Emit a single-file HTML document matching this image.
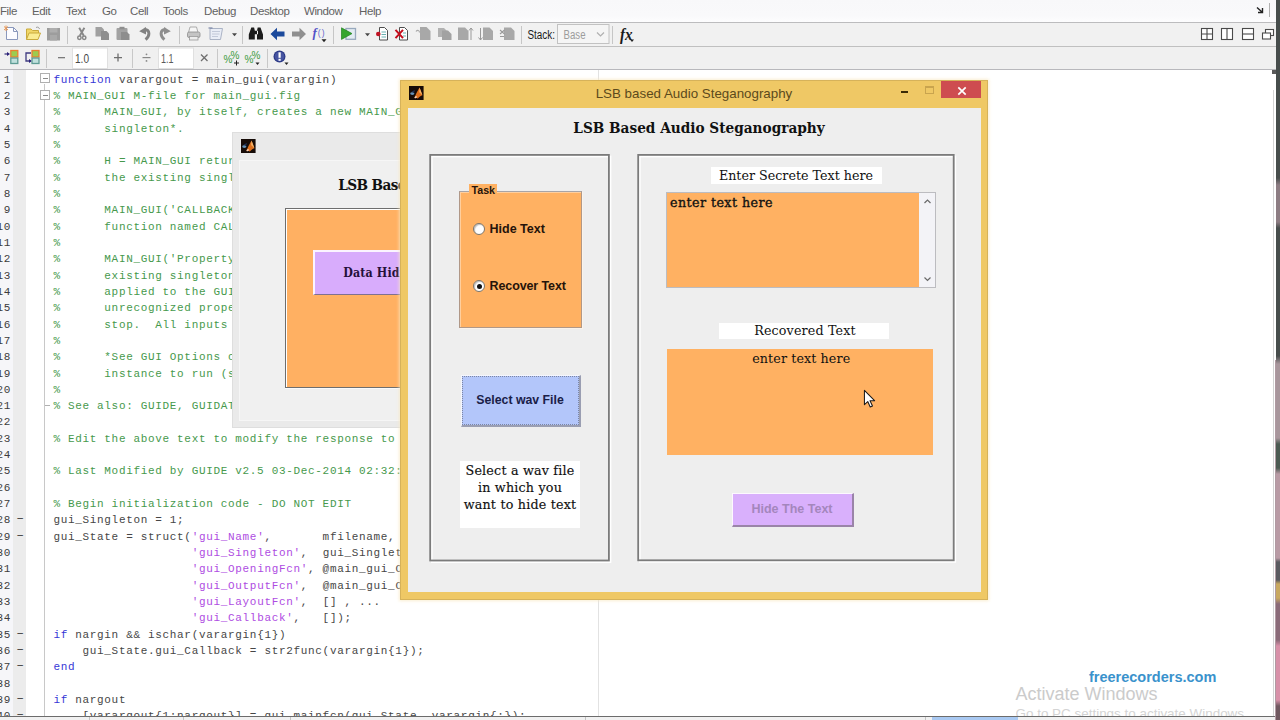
<!DOCTYPE html>
<html lang="en">
<head>
<meta charset="utf-8">
<title>LSB based Audio Steganography</title>
<style>
*{box-sizing:border-box;margin:0;padding:0}
html,body{width:1280px;height:720px;overflow:hidden;background:#fff}
body{position:relative;font-family:"Liberation Sans",sans-serif;font-size:12px;color:#000}
.abs{position:absolute}
/* ---------- main chrome ---------- */
#menubar{left:0;top:0;width:1276px;height:22px;background:linear-gradient(#f8f8fa,#f9f9fb 70%,#fdfdfe)}
#menubar span{position:absolute;top:4px;font-size:11.5px;letter-spacing:-.4px;line-height:14px;color:#626262;white-space:nowrap}
#menuline{left:0;top:22px;width:1276px;height:1px;background:#bcbcbe}
#tb1{left:0;top:23px;width:1276px;height:23px;background:#f1f1f1}
#tb1line{left:0;top:46px;width:1276px;height:1px;background:#c0c0c0}
#tb2{left:0;top:47px;width:1276px;height:22px;background:#f0f0f0}
#tb2line{left:0;top:69px;width:1276px;height:1px;background:#b8b8bc}
.sep{position:absolute;width:1px;background:#c4c4c4}
.ico{position:absolute;overflow:visible}
.fld{position:absolute;background:#fff;border:1px solid #e2e2e2;font-size:12px;line-height:18px;color:#555;padding-left:2px}
.sym{position:absolute;font-size:13px;line-height:14px;color:#666}
/* ---------- editor ---------- */
#editor{left:0;top:70px;width:1276px;height:646px;background:#fff;overflow:hidden}
#g1{left:0;top:0;width:13px;height:646px;background:#f6f6f9}
#g2{left:13px;top:0;width:13px;height:646px;background:#ececec}
#foldline{left:44px;top:14px;width:1px;height:640px;background:#c8c8c8}
#margin{left:597.8px;top:0;width:1.6px;height:646px;background:#e2e2e2}
#nums,#dashes,#code{position:absolute;top:1.6px;font-family:"Liberation Mono",monospace;font-size:11px;letter-spacing:.675px;line-height:16.34px}
#nums{left:-11px;width:22px;text-align:right;color:#3c3c3c}
#dashes{left:16.3px;width:10px;color:#444;letter-spacing:0;font-size:13px;margin-top:-1.2px}
#code{left:53.4px;color:#464646}
#code div,#nums div,#dashes div{height:16.34px;white-space:pre}
.k{color:#3636d6}.c{color:#46994c}.s{color:#ae4ce2}
.fbox{position:absolute;width:10px;height:10px;border:1px solid #b0b0b0;background:#fff}
.fbox:after{content:"";position:absolute;left:1.5px;top:3.5px;width:5px;height:1px;background:#8a8a8a}
#scroll{left:1273px;top:90px;width:1px;height:626px;background:#d4d4d4}
#darkedge{left:1276px;top:0;width:4px;height:720px;background:linear-gradient(#474d4c 0,#474d4c 178px,#8c7c82 185px,#8c7c82 222px,#474d4c 228px,#474d4c 356px,#a8969c 364px,#a8969c 438px,#4c5a52 444px,#4c5a52 468px,#b89aa4 474px,#b89aa4 558px,#5a5a60 562px,#5a5a60 580px,#c8a860 584px,#c8a860 598px,#8a6a78 604px,#8a6a78 640px,#d890a8 646px,#d890a8 700px,#705860 706px)}
#botline{left:0;top:715.5px;width:1276px;height:1px;background:#6c6c6c}
#botbar{left:0;top:716.5px;width:1276px;height:4px;background:#f1f1f1}
#botblue{left:931.5px;top:716.5px;width:86.5px;height:4px;background:#a9c9f2}

/* ---------- watermarks ---------- */
#wm1{left:1089px;top:667px;font:bold 14.5px "Liberation Sans",sans-serif;line-height:20px;color:#3a92cc;white-space:nowrap}
#wm2{left:1015.5px;top:681.6px;font:18px "Liberation Sans",sans-serif;line-height:24px;color:#cbcbcb;white-space:nowrap}
#wm3{left:1015.5px;top:706.4px;font:13.45px "Liberation Sans",sans-serif;line-height:16px;color:#d4d4d4;white-space:nowrap;height:10px;overflow:hidden}
/* ---------- back window ---------- */
#bw{left:232px;top:132px;width:200px;height:296px;background:#eaeaea;border:1px solid #dedede;overflow:hidden}
#bwc{left:5.5px;top:27px;width:200px;height:261px;background:#f0f0f0;border:1px solid #f6f6f6}
#bwh{left:105.2px;top:42.2px;font:bold 15.2px "DejaVu Serif Condensed","DejaVu Serif",serif;font-stretch:condensed;line-height:20px;letter-spacing:-.6px;color:#111;white-space:nowrap}
#bwp{left:51.5px;top:74.5px;width:200px;height:180.5px;background:#ffb062;border:1px solid #6e6e6e;box-shadow:inset 1px 1px 0 #fff,0 1px 0 #fafafa}
#bwb{left:80px;top:116.5px;width:150px;height:45.5px;background:#d8acfc;border-top:2px solid #fbf4ff;border-left:2px solid #fbf4ff;border-bottom:1px solid #807090}
#bwt{left:110.2px;top:131.2px;letter-spacing:.15px;font:bold 12.3px "DejaVu Serif Condensed","DejaVu Serif",serif;font-stretch:condensed;line-height:18px;color:#24103a;white-space:nowrap}
/* ---------- dialog ---------- */
#dlg{left:400px;top:80px;width:588px;height:520px;background:#efc865;box-shadow:0 0 0 1px #d6b25a inset,0 0 3px 1px rgba(250,234,196,.75)}
#dtitle{left:0;top:5.3px;width:588px;text-align:center;font:13.35px "Liberation Sans",sans-serif;line-height:18px;color:#5c4a1c;white-space:nowrap}
#dclose{left:541px;top:0.5px;width:40px;height:17.5px;background:#ce4c50}
#dc{left:8px;top:28px;width:573px;height:484px;background:#eeeeee}
#dh{left:0;top:9px;width:573px;padding-left:9px;text-align:center;font:bold 15.2px "DejaVu Serif Condensed","DejaVu Serif",serif;font-stretch:condensed;line-height:22px;color:#111;white-space:nowrap}
.pn{position:absolute;border:1px solid #fff}
.pn i{position:absolute;left:-2px;top:-2px;width:100%;height:100%;border:1px solid #7e7e7e;box-sizing:content-box}
.cam{font-family:"DejaVu Serif",serif;font-size:12.7px;color:#111;white-space:nowrap}
.arb{font-family:"Liberation Sans",sans-serif;font-weight:bold;font-size:12.5px;color:#26140a;white-space:nowrap}
.radio{position:absolute;width:12px;height:12px;border-radius:50%;background:#fff;border:1px solid #7c7468;box-shadow:inset 1px 1px 1px rgba(0,0,0,.25)}
</style>
</head>
<body>
<!-- MENU -->
<div id="menubar" class="abs">
<span style="left:0px">File</span><span style="left:32px">Edit</span><span style="left:66px">Text</span><span style="left:102px">Go</span><span style="left:130px">Cell</span><span style="left:163px">Tools</span><span style="left:204px">Debug</span><span style="left:250px">Desktop</span><span style="left:304px">Window</span><span style="left:359px">Help</span>
</div>
<div id="menuline" class="abs"></div>
<div id="tb1" class="abs"></div>
<div id="tb1line" class="abs"></div>
<div id="tb2" class="abs"></div>
<div id="tb2line" class="abs"></div>
<svg class="abs" style="left:0;top:23px" width="1276" height="47" viewBox="0 23 1276 47" font-family="Liberation Sans, sans-serif">
<!-- toolbar 1 -->
<path d="M6.5 27.5h7l4 4v8h-11z" fill="#fcfcff" stroke="#8a98bc"/><path d="M13.5 27.5v4h4" fill="none" stroke="#8a98bc"/>
<path d="M4 26.5l4 3.5M8 26.5l-4 3.5M6 25.5v5.500" stroke="#e89858" stroke-width="1"/>
<path d="M26.500 39.500v-10.500h4.500l1.500 1.500h6v2.500" fill="#f1d768" stroke="#c9aa3c"/><path d="M26.500 39.500l2.500-6.500h11.500l-2.500 6.500z" fill="#faec92" stroke="#c9aa3c"/>
<path d="M36 27.500c2-1 3 0 3.500 1.500" fill="none" stroke="#888" stroke-width=".8"/>
<rect x="47" y="28" width="13" height="12.500" fill="#9d9d9d"/><rect x="49.500" y="28" width="8" height="4.500" fill="#aeaeae"/><rect x="50" y="35" width="7" height="5.500" fill="#a9a9a9"/>
<rect x="67" y="26" width="1" height="18" fill="#c6c6c6"/>
<path d="M79.200 27.800l4.600 8M84.400 27.800l-4.600 8" stroke="#878787" stroke-width="1.900" fill="none"/><circle cx="79.400" cy="37.800" r="1.700" fill="none" stroke="#878787" stroke-width="1.500"/><circle cx="84.200" cy="37.800" r="1.700" fill="none" stroke="#878787" stroke-width="1.500"/>
<path d="M95.500 27h6l2.500 2.500v7h-8.500z" fill="#a0a0a0"/><path d="M101 31h5.500l2.500 2.500v6.500h-8z" fill="#8f8f8f"/>
<rect x="116.500" y="28" width="11" height="12" rx="1" fill="#a2a2a2"/><rect x="119.500" y="26.800" width="5" height="2.500" fill="#8e8e8e"/><path d="M121 32h6l2.500 2.500v5.500h-8.500z" fill="#8d8d8d"/>
<path d="M145.600 39.700C149.800 36 150.600 30.300 144.500 29.300" fill="none" stroke="#828282" stroke-width="2.900"/><path d="M139.200 31.200l6.800-4.200v7.600z" fill="#828282"/>
<path d="M164.400 39.700C160.200 36 159.400 30.300 165.500 29.300" fill="none" stroke="#8e8e8e" stroke-width="2.900"/><path d="M170.800 31.200l-6.800-4.200v7.600z" fill="#8e8e8e"/>
<rect x="179" y="26" width="1" height="18" fill="#c6c6c6"/>
<path d="M190 27h6.500l1.500 5.500h-9.500z" fill="#f6f6f6" stroke="#9a9a9a" stroke-width=".8"/><rect x="187.500" y="32" width="12.500" height="5.500" rx="1.500" fill="#c4c4c4" stroke="#8e8e8e" stroke-width=".8"/><rect x="189.500" y="36.500" width="8.500" height="3.500" fill="#ededed" stroke="#9a9a9a" stroke-width=".8"/>
<path d="M210 28.500h12.500l-2 11h-10.500z" fill="#e9edf6" stroke="#a3abc0" stroke-width=".9"/><path d="M212 31.500h8M212 34h7.500M212 36.500h6" stroke="#b8bfd2" stroke-width=".8"/><path d="M208.500 28h4" stroke="#7c88a8" stroke-width="1.200"/>
<path d="M232 33.300h5l-2.500 3z" fill="#484848"/>
<rect x="242" y="26" width="1" height="18" fill="#c6c6c6"/>
<path d="M251.300 27.600h2.800l.7 3v8.800h-6v-5zM260.500 27.600h-2.800l-.7 3v8.800h6v-5zM254 30.800h4v3.400h-4z" fill="#1c1c1c"/>
<path d="M270.500 34l6.500-6.300v3.800h7.500v5h-7.500v3.800z" fill="#1c4a9c"/>
<path d="M306 34l-6.500-6.300v3.800h-7.500v5h7.500v3.800z" fill="#8f8f8f"/>
<text x="312.500" y="37.300" font-family="Liberation Serif, serif" font-style="italic" font-weight="bold" font-size="13" fill="#5252c8">f</text><text x="317.800" y="36" font-size="8.500" fill="#6464cc" letter-spacing="1">()</text><path d="M321.500 39.300h5l-2.500 3z" fill="#222"/>
<rect x="333" y="26" width="1" height="18" fill="#c6c6c6"/>
<rect x="346" y="28.500" width="9.500" height="10.800" fill="#e3ecf2" stroke="#98a9bd" stroke-width="1.300"/><path d="M341.500 27.800l10.500 5.800-10.500 5.800z" fill="#35a52f" stroke="#1f821f" stroke-width=".7"/>
<path d="M365 33.300h5l-2.500 3z" fill="#484848"/>
<path d="M379.500 27.500h5l3 3v9.500h-8z" fill="#fff" stroke="#3a3a3a" stroke-width=".9"/><path d="M381.500 32h4.500M381.500 34.500h4.500M381.500 37h4.500" stroke="#58a8a8" stroke-width=".9"/><circle cx="378.300" cy="34" r="2.300" fill="#c01424"/>
<path d="M399.500 27.500h5l3 3v9.500h-8z" fill="#fff" stroke="#3a3a3a" stroke-width=".9"/><path d="M403 33h3M403 36h3" stroke="#58a8a8" stroke-width=".9"/><path d="M395.500 29.800l7.500 8.400M403 29.800l-7.500 8.400" stroke="#c40d1c" stroke-width="2"/>
<path d="M420 27h6.500l4 4v9h-10.500z" fill="#a8a8a8"/><path d="M416 31.500c1.500-2 3.500-1 3.500 1" fill="none" stroke="#aaa" stroke-width="1.200"/>
<path d="M438 28h6l3 3v6h-9z" fill="#b2b2b2"/><path d="M442 30.500h6l3.500 3.500v6h-9.500z" fill="#a2a2a2"/>
<path d="M458 27.500h7l3.500 3.500v9h-10.500z" fill="#a8a8a8"/><path d="M471 40v-12M469 30.500l2-2.500 2 2.500" fill="none" stroke="#999" stroke-width="1"/>
<path d="M483 27.500h6.500l3.500 3.500v9h-10z" fill="#a8a8a8"/><path d="M480.500 28v12M478.500 37.500l2 2.500 2-2.500" fill="none" stroke="#999" stroke-width="1"/>
<path d="M504 27.500h7l3.500 3.500v9h-10.500z" fill="#a8a8a8"/><path d="M500 30l4.500 4M504.500 30l-4.500 4M500 36.500h4" fill="none" stroke="#999" stroke-width="1.100"/>
<rect x="521" y="26" width="1" height="18" fill="#c6c6c6"/>
<text x="527.500" y="38.500" font-size="12" fill="#1a1a1a" textLength="27.500" lengthAdjust="spacingAndGlyphs">Stack:</text>
<rect x="557.500" y="24.500" width="51.500" height="19" fill="#f5f5f5" stroke="#c2c2c2"/>
<text x="563.500" y="38.500" font-size="12" fill="#9c9c9c" textLength="22" lengthAdjust="spacingAndGlyphs">Base</text>
<path d="M597 32.500l3.500 3.500 3.500-3.500" fill="none" stroke="#b0b0b0" stroke-width="1.200"/>
<rect x="612" y="26" width="1" height="18" fill="#c6c6c6"/>
<text x="620" y="39.500" font-family="Liberation Serif, serif" font-style="italic" font-weight="bold" font-size="16" fill="#1a1a1a" textLength="12.500" lengthAdjust="spacingAndGlyphs">fx</text><path d="M630 39.500h4l-2 2.500z" fill="#222"/>
<g fill="#fff" stroke="#4a4a4a" stroke-width="1.100"><rect x="1201.500" y="28.500" width="11" height="11"/><path d="M1207 28.500v11M1201.500 34h11"/>
<rect x="1221.500" y="28.500" width="11" height="11"/><path d="M1227 28.500v11"/>
<rect x="1242.500" y="28.500" width="11" height="11"/><path d="M1242.500 34h11"/>
<rect x="1265.500" y="29.500" width="8" height="6"/><rect x="1262.500" y="33" width="8" height="6"/></g>
<!-- toolbar 2 -->
<path d="M4.500 54h3" stroke="#3e3a80" stroke-width="1.300"/><path d="M7 52l3 2-3 2z" fill="#2a1f78"/>
<rect x="10.800" y="50.500" width="7" height="6.500" fill="#9ccc50" stroke="#e88030" stroke-width="1.300"/><rect x="10.800" y="58" width="7" height="5.500" fill="#bfe0dc" stroke="#5e9c94" stroke-width="1.300"/>
<path d="M31 53h-5v8h4" fill="none" stroke="#3e3a80" stroke-width="1.300"/><path d="M29 59l3 2-3 2z" fill="#2a1f78"/>
<rect x="32" y="50.500" width="7" height="6.500" fill="#9ccc50" stroke="#e88030" stroke-width="1.300"/><rect x="32" y="58" width="7" height="5.500" fill="#bfe0dc" stroke="#5e9c94" stroke-width="1.300"/>
<rect x="46" y="49" width="1" height="19" fill="#c8c8c8"/>
<rect x="58" y="57" width="7" height="1.300" fill="#7a7a7a"/>
<rect x="72.500" y="48" width="35" height="20.500" fill="#fff" stroke="#e0e0e0"/>
<text x="75" y="62.700" font-size="13" fill="#484848" textLength="14" lengthAdjust="spacingAndGlyphs">1.0</text>
<path d="M114 57.600h8M118 53.600v8" stroke="#6e6e6e" stroke-width="1.300"/>
<rect x="132" y="49" width="1" height="19" fill="#c8c8c8"/>
<path d="M142.500 57.600h8" stroke="#888" stroke-width="1.200"/><circle cx="146.500" cy="54.300" r=".9" fill="#888"/><circle cx="146.500" cy="60.900" r=".9" fill="#888"/>
<rect x="158.500" y="48" width="35" height="20.500" fill="#fff" stroke="#e0e0e0"/>
<text x="161" y="62.700" font-size="13" fill="#5a5a5a" textLength="12.500" lengthAdjust="spacingAndGlyphs">1.1</text>
<path d="M201 54.500l6.500 6.500M207.500 54.500l-6.500 6.500" stroke="#6e6e6e" stroke-width="1.300"/>
<rect x="217" y="49" width="1" height="19" fill="#c8c8c8"/>
<text x="223.500" y="63" font-size="10" fill="#3b9a3b">%</text><text x="230.500" y="59" font-size="10" fill="#3b9a3b">%</text><path d="M234 63h5M236.500 60.500v5" stroke="#222" stroke-width="1"/>
<text x="244.500" y="63" font-size="10" fill="#3b9a3b">%</text><text x="251.500" y="59" font-size="10" fill="#3b9a3b">%</text><path d="M255.500 62.500h4l-2 2.500z" fill="#222"/>
<rect x="267" y="49" width="1" height="19" fill="#c8c8c8"/>
<circle cx="279.500" cy="56.500" r="6" fill="#2c3a86"/><circle cx="279.500" cy="56.500" r="4.800" fill="#5866b4" opacity=".6"/><rect x="278.500" y="52.300" width="2.200" height="5.500" fill="#fff"/><rect x="278.500" y="58.800" width="2.200" height="2" fill="#fff"/>
<path d="M284.500 62.500h4l-2 2.500z" fill="#222"/>
</svg>
<!-- menubar right -->
<svg class="abs" style="left:1250px;top:0" width="26" height="22" viewBox="1250 0 26 22"><path d="M1257 7.500l5 4.500M1262.500 8v4.500h-4.500" fill="none" stroke="#222" stroke-width="1.400"/><rect x="1269" y="3" width="1" height="14" fill="#b0b0b0"/></svg>

<!-- EDITOR -->
<div id="editor" class="abs">
<div id="g1" class="abs"></div><div id="g2" class="abs"></div>
<div id="foldline" class="abs"></div>
<div id="margin" class="abs"></div>
<div id="nums"><div>1</div><div>2</div><div>3</div><div>4</div><div>5</div><div>6</div><div>7</div><div>8</div><div>9</div><div>10</div><div>11</div><div>12</div><div>13</div><div>14</div><div>15</div><div>16</div><div>17</div><div>18</div><div>19</div><div>20</div><div>21</div><div>22</div><div>23</div><div>24</div><div>25</div><div>26</div><div>27</div><div>28</div><div>29</div><div>30</div><div>31</div><div>32</div><div>33</div><div>34</div><div>35</div><div>36</div><div>37</div><div>38</div><div>39</div><div>40</div></div>
<div id="dashes"><div> </div><div> </div><div> </div><div> </div><div> </div><div> </div><div> </div><div> </div><div> </div><div> </div><div> </div><div> </div><div> </div><div> </div><div> </div><div> </div><div> </div><div> </div><div> </div><div> </div><div> </div><div> </div><div> </div><div> </div><div> </div><div> </div><div> </div><div>–</div><div>–</div><div> </div><div> </div><div> </div><div> </div><div> </div><div>–</div><div>–</div><div>–</div><div> </div><div>–</div><div>–</div></div>
<div id="code">
<div><span class="k">function</span> varargout = main_gui(varargin)</div>
<div class="c">% MAIN_GUI M-file for main_gui.fig</div>
<div class="c">%      MAIN_GUI, by itself, creates a new MAIN_GUI or raises the existing</div>
<div class="c">%      singleton*.</div>
<div class="c">%</div>
<div class="c">%      H = MAIN_GUI returns the handle to a new MAIN_GUI or the handle to</div>
<div class="c">%      the existing singleton*.</div>
<div class="c">%</div>
<div class="c">%      MAIN_GUI('CALLBACK',hObject,eventData,handles,...) calls the local</div>
<div class="c">%      function named CALLBACK in MAIN_GUI.M with the given input arguments.</div>
<div class="c">%</div>
<div class="c">%      MAIN_GUI('Property','Value',...) creates a new MAIN_GUI or raises the</div>
<div class="c">%      existing singleton*.  Starting from the left, property value pairs are</div>
<div class="c">%      applied to the GUI before main_gui_OpeningFcn gets called.  An</div>
<div class="c">%      unrecognized property name or invalid value makes property application</div>
<div class="c">%      stop.  All inputs are passed to main_gui_OpeningFcn via varargin.</div>
<div class="c">%</div>
<div class="c">%      *See GUI Options on GUIDE's Tools menu.  Choose "GUI allows only one</div>
<div class="c">%      instance to run (singleton)".</div>
<div class="c">%</div>
<div class="c">% See also: GUIDE, GUIDATA, GUIHANDLES</div>
<div> </div>
<div class="c">% Edit the above text to modify the response to help main_gui</div>
<div> </div>
<div class="c">% Last Modified by GUIDE v2.5 03-Dec-2014 02:32:41</div>
<div> </div>
<div class="c">% Begin initialization code - DO NOT EDIT</div>
<div>gui_Singleton = 1;</div>
<div>gui_State = struct(<span class="s">'gui_Name'</span>,       mfilename, ...</div>
<div>                   <span class="s">'gui_Singleton'</span>,  gui_Singleton, ...</div>
<div>                   <span class="s">'gui_OpeningFcn'</span>, @main_gui_OpeningFcn, ...</div>
<div>                   <span class="s">'gui_OutputFcn'</span>,  @main_gui_OutputFcn, ...</div>
<div>                   <span class="s">'gui_LayoutFcn'</span>,  [] , ...</div>
<div>                   <span class="s">'gui_Callback'</span>,   []);</div>
<div><span class="k">if</span> nargin &amp;&amp; ischar(varargin{1})</div>
<div>    gui_State.gui_Callback = str2func(varargin{1});</div>
<div><span class="k">end</span></div>
<div> </div>
<div><span class="k">if</span> nargout</div>
<div>    [varargout{1:nargout}] = gui_mainfcn(gui_State, varargin{:});</div>
</div>
<div class="fbox" style="left:40px;top:3px"></div>
<div class="fbox" style="left:40px;top:20px"></div>
<div class="abs" style="left:45px;top:335px;width:5px;height:1px;background:#b0b0b0"></div>
</div>
<div id="scroll" class="abs"></div>
<div id="darkedge" class="abs"></div>
<div id="botline" class="abs"></div>
<div id="botbar" class="abs"></div><div id="botblue" class="abs"></div><div class="abs" style="left:89px;top:717px;width:1px;height:3px;background:#c4c4c4"></div><div class="abs" style="left:183px;top:717px;width:1px;height:3px;background:#c4c4c4"></div><div class="abs" style="left:290px;top:717px;width:1px;height:3px;background:#c4c4c4"></div><div class="abs" style="left:585px;top:717px;width:1px;height:3px;background:#c4c4c4"></div><div class="abs" style="left:925px;top:717px;width:1px;height:3px;background:#c4c4c4"></div><div class="abs" style="left:1272px;top:70px;width:4px;height:4px;background:#5a5a5a"></div><div class="abs" style="left:1275px;top:360px;width:1px;height:360px;background:#b09aa2"></div>
<div id="wm1" class="abs">freerecorders.com</div>
<div id="wm2" class="abs">Activate Windows</div>
<div id="wm3" class="abs">Go to PC settings to activate Windows.</div>

<div id="bw" class="abs">
<svg class="abs" style="left:8px;top:5.500px;filter:blur(.35px)" width="14.600" height="14.200" viewBox="0 0 14.600 14.200"><rect width="14.600" height="14.200" fill="#160b07"/><ellipse cx="3.300" cy="7.600" rx="2.100" ry="1.400" fill="#6592b8"/><path d="M2.500 5.500l3.500-1.500-1 3z" fill="#1c2c50"/><path d="M5.300 12l2.200-5 3-5.600 1.600 4 1.300 3.800c-1.600.3-3.200 1.600-4.600 3.400-1.200-.9-2.300-1-3.500-.6z" fill="#dd6f1c"/><path d="M10.500 1.400l1.600 4 1.300 3.800c-1-.9-2-2.400-3.300-3z" fill="#f2b36a"/><ellipse cx="6.700" cy="11.200" rx="1.300" ry=".9" fill="#f6d2bc" transform="rotate(-35 6.700 11.200)"/></svg>
<div id="bwc" class="abs"></div>
<div id="bwp" class="abs"></div>
<div id="bwh" class="abs">LSB Based</div>
<div id="bwb" class="abs"></div>
<div id="bwt" class="abs">Data Hiding</div>
</div>
<div id="dlg" class="abs">
<svg class="abs" style="left:9px;top:6px;filter:blur(.35px)" width="14.600" height="14.200" viewBox="0 0 14.600 14.200"><rect width="14.600" height="14.200" fill="#160b07"/><ellipse cx="3.300" cy="7.600" rx="2.100" ry="1.400" fill="#6592b8"/><path d="M2.500 5.500l3.500-1.500-1 3z" fill="#1c2c50"/><path d="M5.300 12l2.200-5 3-5.600 1.600 4 1.300 3.800c-1.600.3-3.200 1.600-4.600 3.400-1.200-.9-2.300-1-3.500-.6z" fill="#dd6f1c"/><path d="M10.500 1.400l1.600 4 1.300 3.800c-1-.9-2-2.400-3.300-3z" fill="#f2b36a"/><ellipse cx="6.700" cy="11.200" rx="1.300" ry=".9" fill="#f6d2bc" transform="rotate(-35 6.700 11.200)"/></svg>
<div id="dtitle" class="abs">LSB based Audio Steganography</div>
<div class="abs" style="left:500.500px;top:10.500px;width:7.500px;height:2.800px;background:#3a2a06"></div>
<div class="abs" style="left:524.500px;top:6px;width:9.500px;height:7.500px;border:1px solid #c9a44e;border-top-width:2px"></div>
<div id="dclose" class="abs"><svg class="abs" style="left:15.500px;top:5px" width="10" height="10" viewBox="0 0 10 10"><path d="M1.300 1.300l7.400 7.400M8.700 1.300l-7.400 7.400" stroke="#fff" stroke-width="1.700"/></svg></div>
<div id="dc" class="abs">
<div id="dh" class="abs">LSB Based Audio Steganography</div>
<!-- left panel: page 430..611 x 154..562 -->
<svg class="abs" style="left:0;top:0" width="573" height="484" viewBox="0 0 573 484" fill="none"><g stroke="#fff" stroke-width="1.700"><rect x="23.800" y="48.500" width="178.700" height="405.600"/><rect x="231.800" y="48.500" width="315.500" height="405.400"/></g><g stroke="#7b7b7b" stroke-width="1.800"><rect x="22.200" y="46.900" width="178.700" height="405.600"/><rect x="230.200" y="46.900" width="315.500" height="405.400"/></g></svg>
<!-- right panel: page 638..956 -->

<!-- Task group -->
<div class="abs" style="left:51px;top:83px;width:123px;height:137px;background:#ffb162;border:1px solid #b09888;border-top-color:#a8a4a6;box-shadow:1px 1px 0 #fbf3ea,inset 1px 1px 0 #ffcf9e"></div>
<div class="abs arb" style="left:61px;top:76px;width:28px;height:11px;background:#ffb162;font-size:10.700px;line-height:12px;padding-left:2.500px">Task</div>
<div class="radio" style="left:65px;top:115px"></div>
<div class="abs arb" style="left:81.500px;top:113px;line-height:16px">Hide Text</div>
<div class="radio" style="left:65px;top:172px"><div class="abs" style="left:2.500px;top:2.500px;width:5px;height:5px;border-radius:50%;background:#111"></div></div>
<div class="abs arb" style="left:81.500px;top:170px;line-height:16px;letter-spacing:-.1px">Recover Text</div>
<!-- Select wav button -->
<div class="abs" style="left:53px;top:267px;width:120px;height:52px;background:#b3c6fa;border-top:1px solid #f4f6ff;border-left:1px solid #f4f6ff;border-right:2px solid #9a9eb2;border-bottom:2px solid #9a9eb2">
<div class="abs" style="left:0;top:0;right:0;bottom:0;border:1px dotted #7c86a4"></div>
<div class="abs arb" style="left:0;top:16px;width:100%;text-align:center;line-height:16px;color:#1a2048;font-size:12.300px;padding-right:1px">Select wav File</div></div>
<!-- white note -->
<div class="abs cam" style="left:52px;top:352.500px;width:120px;height:67px;background:#fff;text-align:center;line-height:17.300px;padding-top:1px;letter-spacing:.2px;-webkit-text-stroke:.15px #111">Select a wav file<br>in which you<br>want to hide text</div>
<!-- right side -->
<div class="abs cam" style="left:302.500px;top:58.700px;width:171px;height:17.300px;background:#fff;text-align:center;line-height:17.300px">Enter Secrete Text here</div>
<div class="abs" style="left:258px;top:84px;width:269.500px;height:96px;background:#f3f3f7;border:1px solid #bcbcc0">
<div class="abs cam" style="left:0;top:0;width:251.500px;height:94px;background:#ffb162;padding-left:3px;line-height:19px;-webkit-text-stroke:.35px #111;letter-spacing:.42px">enter text here</div>
<svg class="abs" style="left:251.500px;top:0" width="17" height="94" viewBox="0 0 17 94"><path d="M5.500 10l3-3 3 3M5.500 84.500l3 3 3-3" fill="none" stroke="#6a6a6a" stroke-width="1.200"/></svg>
</div>
<div class="abs cam" style="left:310.500px;top:214.500px;width:170px;height:16.800px;background:#fff;text-align:center;line-height:16.800px;letter-spacing:.15px;padding-left:3px">Recovered Text</div>
<div class="abs cam" style="left:259px;top:240.500px;width:266px;height:106px;background:#ffb162;text-align:center;line-height:19px;padding-left:2.5px;letter-spacing:.1px">enter text here</div>
<!-- hide button -->
<div class="abs" style="left:324px;top:385px;width:122px;height:34px;background:#d9b0fc;border-top:1px solid #fdf8ff;border-left:1px solid #fdf8ff;border-right:2px solid #9a84a8;border-bottom:2px solid #9a84a8">
<div class="abs arb" style="left:0;top:7px;width:100%;text-align:center;line-height:16px;color:#a486bc;padding-right:1px">Hide The Text</div></div>
</div>
<!-- mouse cursor -->
<svg class="abs" style="left:463.200px;top:308.500px" width="13.300" height="19.950" viewBox="0 0 14 21"><path d="M1.500 1.500v15l3.500-3.300 2.600 5.800 2.400-1.100-2.600-5.600h4.800z" fill="#fff" stroke="#1a1a1a" stroke-width="1.100" stroke-linejoin="round"/></svg>
</div>

</body>
</html>
